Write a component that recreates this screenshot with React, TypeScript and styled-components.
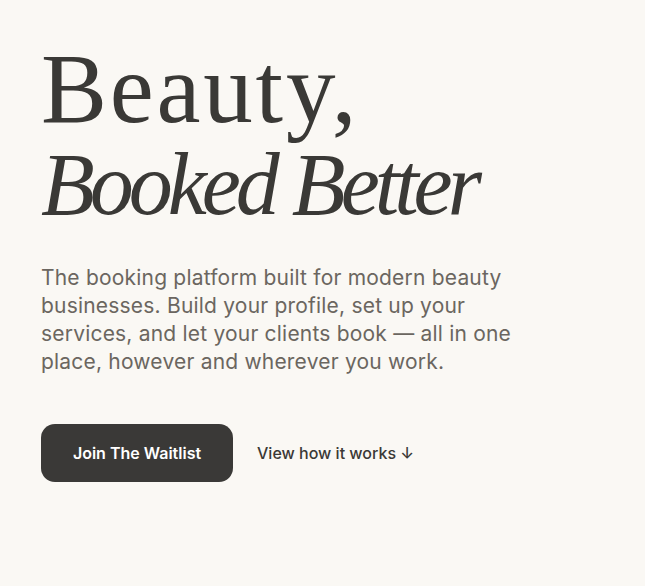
import React, { FC } from 'react';
import styled, { createGlobalStyle } from 'styled-components';

const Global = createGlobalStyle`
  html, body {
    margin: 0;
    padding: 0;
    background: #faf8f4;
  }
  * { box-sizing: border-box; }
`;

const Hero = styled.section`
  min-height: 586px;
  padding: 36px 41px 0;
  background: #faf8f4;
  color: #3a3936;
  font-family: Inter, 'Noto Sans', sans-serif;
`;

const Title = styled.h1`
  margin: 0;
  font-family: 'Liberation Serif', serif;
  font-weight: 400;
  color: #3a3936;
  display: flex;
  flex-direction: column;
`;

const TitleLine = styled.span<{ $italic?: boolean }>`
  font-size: ${p => (p.$italic ? '88px' : '99px')};
  line-height: ${p => (p.$italic ? '88px' : '105px')};
  font-style: ${p => (p.$italic ? 'italic' : 'normal')};
  letter-spacing: ${p => (p.$italic ? '-5px' : '2.8px')};
`;

const Lead = styled.p`
  margin: 35px 0 0;
  max-width: 490px;
  font-size: 21px;
  line-height: 28px;
  letter-spacing: 0.2px;
  color: #6b6660;
`;

const Actions = styled.div`
  display: flex;
  align-items: center;
  gap: 24px;
  margin-top: 48px;
`;

const PrimaryButton = styled.button`
  width: 192px;
  height: 58px;
  border: none;
  border-radius: 14px;
  background: #3a3937;
  color: #ffffff;
  font-family: Inter, sans-serif;
  font-size: 16px;
  font-weight: 600;
  cursor: pointer;
`;

const TextLink = styled.a`
  font-size: 16px;
  font-weight: 500;
  color: #3a3936;
  text-decoration: none;
`;

const App: FC = () => {
  return (
    <>
      <Global />
      <Hero>
        <Title>
          <TitleLine>Beauty,</TitleLine>
          <TitleLine $italic>Booked Better</TitleLine>
        </Title>
        <Lead>
          The booking platform built for modern beauty businesses. Build your profile, set up your
          services, and let your clients book — all in one place, however and wherever you work.
        </Lead>
        <Actions>
          <PrimaryButton>Join The Waitlist</PrimaryButton>
          <TextLink href="#how">View how it works ↓</TextLink>
        </Actions>
      </Hero>
    </>
  );
};

export default App;
